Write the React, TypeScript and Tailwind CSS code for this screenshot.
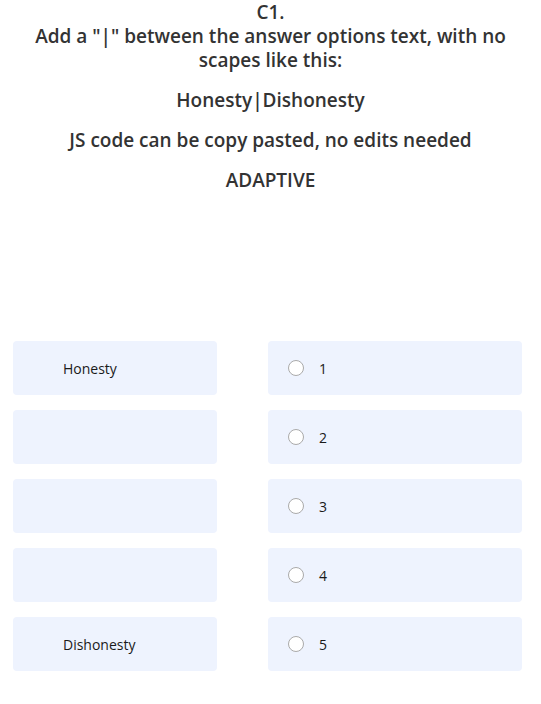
const rows = [
  { label: "Honesty", value: "1" },
  { label: "", value: "2" },
  { label: "", value: "3" },
  { label: "", value: "4" },
  { label: "Dishonesty", value: "5" },
];

export default function App() {
  return (
    <div className="min-h-screen bg-white font-['Open_Sans',sans-serif] text-[#333]">
      <div className="flex flex-col items-center text-center text-[19px] font-semibold leading-6 px-8">
        <div>C1.</div>
        <div className="max-w-[480px]">Add a "|" between the answer options text, with no scapes like this:</div>
        <p className="mt-4">Honesty|Dishonesty</p>
        <p className="mt-4">JS code can be copy pasted, no edits needed</p>
        <p className="mt-4">ADAPTIVE</p>
      </div>
      <div className="mt-[149px] flex flex-col gap-[15px] px-[13px]">
        {rows.map((row) => (
          <div key={row.value} className="flex gap-[51px]">
            <div className="w-[204px] h-[54px] rounded bg-[#eef3fe] flex items-center pl-[50px] text-[14px] text-[#1a1a1a]">
              {row.label}
            </div>
            <label className="w-[254px] h-[54px] rounded bg-[#eef3fe] flex items-center pl-5 gap-[15px] text-[14px] text-[#1a1a1a]">
              <span className="w-4 h-4 rounded-full border border-[#aaa] bg-white"></span>
              {row.value}
            </label>
          </div>
        ))}
      </div>
    </div>
  );
}
